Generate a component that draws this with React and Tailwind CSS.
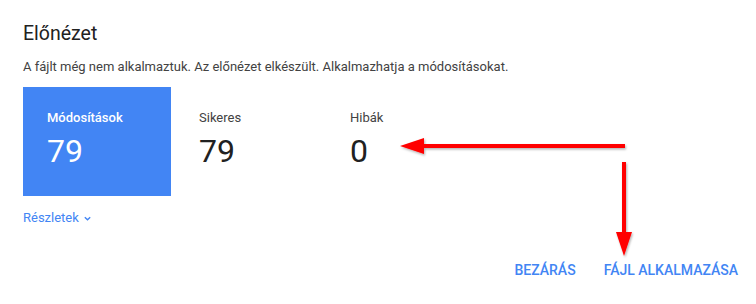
export default function App() {
  const stats = [
    { label: 'Módosítások', value: 79, active: true },
    { label: 'Sikeres', value: 79 },
    { label: 'Hibák', value: 0 },
  ]

  return (
    <div className="relative w-[756px] h-[304px] bg-white font-['Roboto',sans-serif] text-[#212121] overflow-hidden">
      <div className="px-[23px] pt-[21px]">
        <h2 className="text-[19.5px] leading-[26px] font-normal">Előnézet</h2>
        <p className="mt-[12px] text-[13px] leading-[16px] text-[#424242]">
          A fájlt még nem alkalmaztuk. Az előnézet elkészült. Alkalmazhatja a módosításokat.
        </p>

        <div className="mt-[12px] flex">
          {stats.map((s) => (
            <div
              key={s.label}
              className={
                s.active
                  ? 'w-[148px] h-[109px] mr-[4px] px-[24px] pt-[23px] bg-[#4285f4] text-white'
                  : 'w-[151px] h-[109px] px-[24px] pt-[23px]'
              }
            >
              <div className={`text-[13px] leading-[16px] ${s.active ? 'font-medium' : 'text-[#424242]'}`}>{s.label}</div>
              <div className="mt-[8px] text-[32px] leading-[34px] font-normal">{s.value}</div>
            </div>
          ))}
        </div>

        <button className="mt-[14px] flex items-center gap-[4px] text-[13px] leading-[16px] text-[#4285f4]">
          Részletek
          <svg width="9" height="9" viewBox="0 0 10 10" fill="none" stroke="currentColor" strokeWidth="1.5">
            <path d="M2 3.5 L5 6.5 L8 3.5" />
          </svg>
        </button>
      </div>

      <div className="absolute right-[18px] top-[262px] flex gap-[28px] text-[14px] leading-[16px] font-medium text-[#4285f4]">
        <button>BEZÁRÁS</button>
        <button>FÁJL ALKALMAZÁSA</button>
      </div>

      <svg className="absolute inset-0 pointer-events-none" width="756" height="304">
        <defs>
          <filter id="sh" x="-20%" y="-20%" width="140%" height="140%">
            <feDropShadow dx="1" dy="1.5" stdDeviation="1.2" floodColor="#000" floodOpacity="0.3" />
          </filter>
        </defs>
        <g filter="url(#sh)" fill="#ff0000" stroke="none">
          <rect x="420" y="144" width="205" height="4" />
          <polygon points="400,146 424,138 424,154" />
          <rect x="622" y="162" width="4" height="74" />
          <polygon points="624,256 616,232 632,232" />
        </g>
      </svg>
    </div>
  )
}
